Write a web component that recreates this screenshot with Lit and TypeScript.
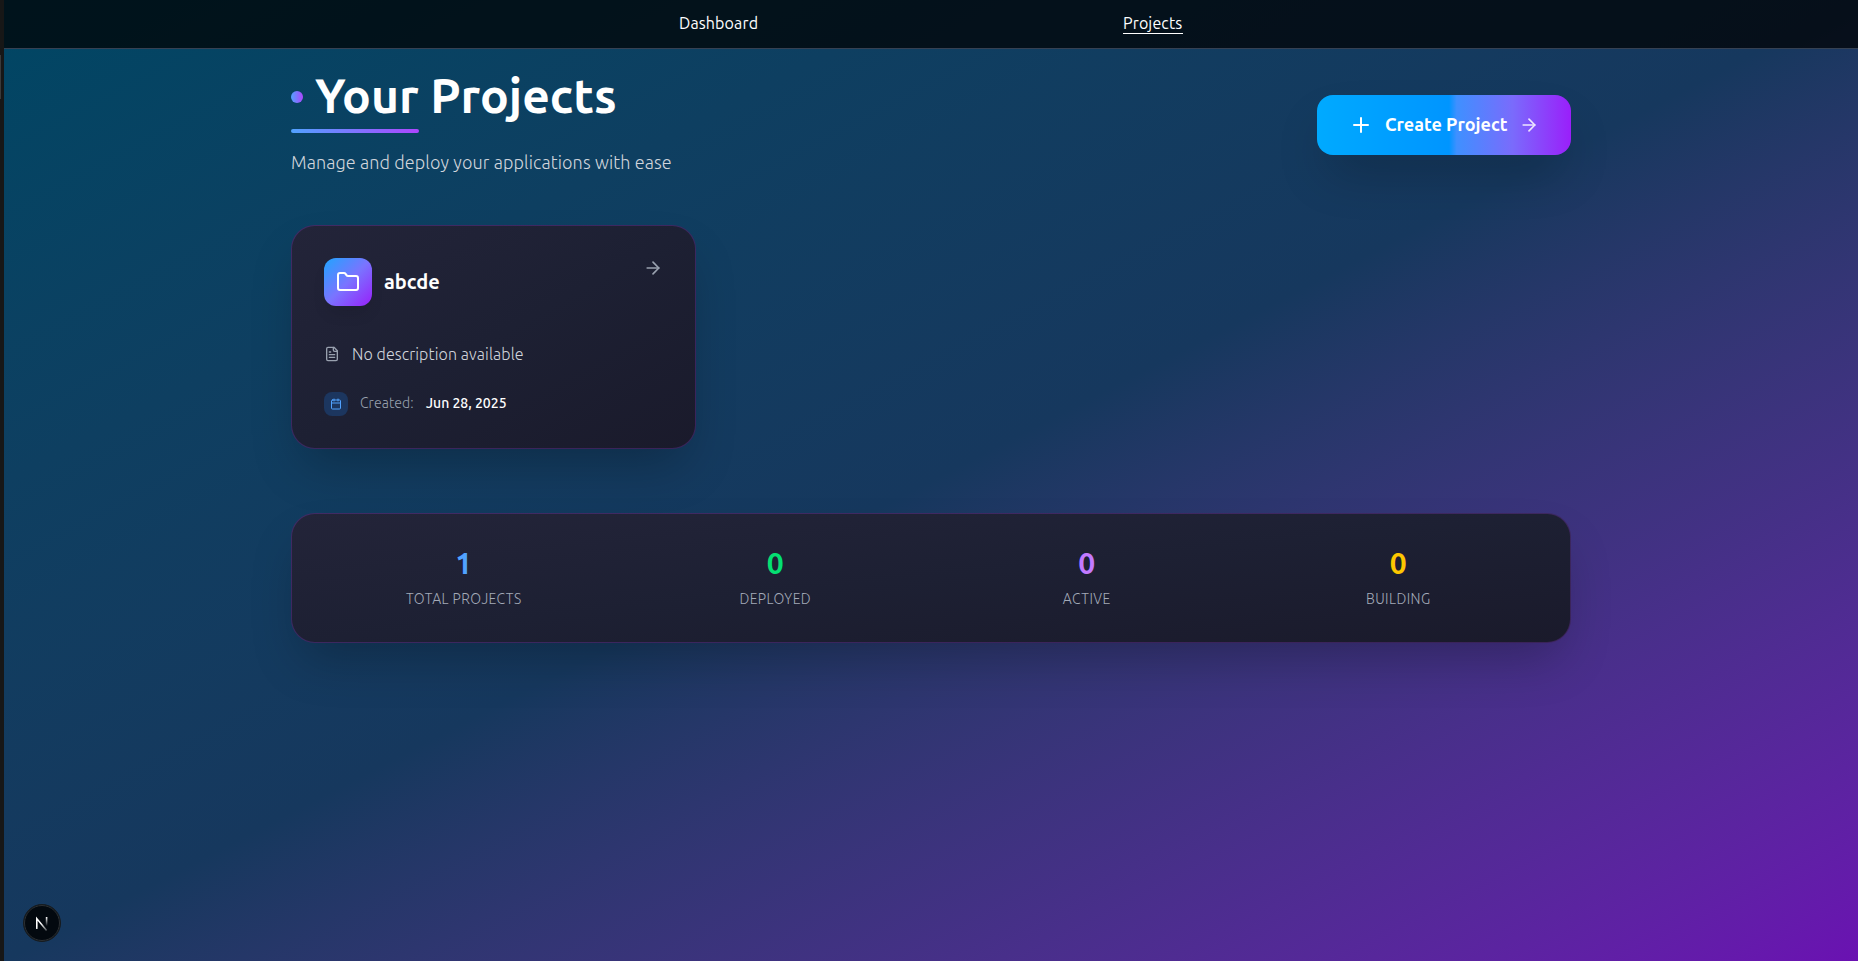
import { LitElement, html, css, svg } from "lit";
import { customElement } from "lit/decorators.js";

const stroke = (size: number, width: number, body: unknown) => html`<svg
  width=${size} height=${size} viewBox="0 0 24 24" fill="none" stroke="currentColor"
  stroke-width=${width} stroke-linecap="round" stroke-linejoin="round">${body}</svg>`;

const arrow = svg`<path d="M5 12h14"/><path d="m12 5 7 7-7 7"/>`;
const plus = svg`<path d="M5 12h14"/><path d="M12 5v14"/>`;
const folder = svg`<path d="M20 20a2 2 0 0 0 2-2V8a2 2 0 0 0-2-2h-7.9a2 2 0 0 1-1.69-.9L9.6 3.9A2 2 0 0 0 7.93 3H4a2 2 0 0 0-2 2v13a2 2 0 0 0 2 2Z"/>`;
const file = svg`<path d="M15 2H6a2 2 0 0 0-2 2v16a2 2 0 0 0 2 2h12a2 2 0 0 0 2-2V7Z"/><path d="M14 2v4a2 2 0 0 0 2 2h4"/><path d="M10 9H8"/><path d="M16 13H8"/><path d="M16 17H8"/>`;
const calendar = svg`<path d="M8 2v4"/><path d="M16 2v4"/><rect width="18" height="18" x="3" y="4" rx="2"/><path d="M3 10h18"/>`;

const stats = [
  { value: 1, label: "TOTAL PROJECTS", tone: "blue" },
  { value: 0, label: "DEPLOYED", tone: "green" },
  { value: 0, label: "ACTIVE", tone: "purple" },
  { value: 0, label: "BUILDING", tone: "yellow" },
];

@customElement("app-root")
export class AppRoot extends LitElement {
  static styles = css`
    :host {
      display: flex;
      height: 961px;
      overflow: hidden;
      position: relative;
      font-family: Ubuntu, "Noto Sans", sans-serif;
      font-size: 16px;
      line-height: 24px;
      color: #fff;
      background: #171717;
    }
    * { box-sizing: border-box; }
    svg { display: block; flex: none; }
    h1, h2, p { margin: 0; }
    .edge { width: 4px; flex: none; padding-top: 55px; }
    .thumb { width: 1px; height: 44px; background: #3a3a3a; }
    .page {
      flex: 1;
      background: linear-gradient(to bottom right in oklab, #004664, #16385e 50%, #6a11b2);
    }
    .nav {
      height: 49px;
      display: flex;
      justify-content: center;
      gap: 365px;
      padding-top: 11px;
      background: rgba(0, 0, 0, 0.72);
      border-bottom: 1px solid #364153;
      white-space: nowrap;
    }
    .nav span { height: 23px; letter-spacing: 0.13px; }
    .dash { width: 79px; }
    .proj { width: 60px; border-bottom: 1px solid #fff; }
    .content { width: 1280px; margin: 0 auto; padding-top: 18px; }
    .head { display: flex; justify-content: space-between; height: 158px; }
    .title { display: flex; align-items: center; gap: 12px; height: 60px; }
    .dot { width: 12px; height: 12px; border-radius: 50%; background: linear-gradient(90deg, #51a2ff, #ad46ff); }
    h1 { font-size: 48px; line-height: 60px; margin-top: -4px; font-weight: 700; white-space: nowrap; }
    .bar { width: 128px; height: 4px; border-radius: 2px; margin-top: 2px; background: linear-gradient(90deg, #51a2ff, #ad46ff); }
    .sub { margin-top: 15px; font-size: 18px; line-height: 28px; font-weight: 300; letter-spacing: 0.11px; color: #d1d5dc; white-space: nowrap; }
    .create {
      display: flex;
      align-items: center;
      gap: 12px;
      width: 254px;
      height: 60px;
      padding: 0 32px;
      margin-top: 28px;
      border-radius: 16px;
      font-size: 18px;
      font-weight: 600;
      white-space: nowrap;
      background: linear-gradient(90deg, #00aaff, #0095ff 52%, #3f90ff 55%, #7a6bfc 77%, #9a1ffa);
      box-shadow: 0 25px 50px -12px rgba(0, 0, 0, 0.25);
    }
    .create-label { width: 122px; margin-top: -2px; }
    .faded { opacity: 0.85; }
    .panel {
      border: 1px solid rgba(173, 70, 255, 0.22);
      border-radius: 24px;
      background: linear-gradient(to bottom right, #232439, #1d2033 50%, #1a1a2b) border-box;
      box-shadow: 0 25px 50px -12px rgba(0, 0, 0, 0.25);
    }
    .card { width: 405.33px; height: 224px; padding: 32px; }
    .row { display: flex; align-items: center; }
    .top { gap: 12px; height: 48px; }
    .tile {
      display: grid;
      place-items: center;
      width: 48px;
      height: 48px;
      border-radius: 12px;
      background: linear-gradient(135deg, #1fa5ff, #7a74ff 50%, #9820fa);
      box-shadow: 0 10px 15px -3px rgba(0, 0, 0, 0.1);
    }
    h2 { flex: 1; font-size: 20px; line-height: 28px; font-weight: 600; }
    .go { align-self: flex-start; color: #99a1af; }
    .desc { margin-top: 36px; gap: 12px; height: 24px; color: #d1d5dc; font-weight: 300; letter-spacing: 0.1px; white-space: nowrap; }
    .desc svg { color: #99a1af; }
    .date { margin-top: 26px; gap: 12px; height: 24px; font-size: 14px; line-height: 20px; white-space: nowrap; }
    .made, .when { margin-top: -2px; }
    .cal { display: grid; place-items: center; width: 24px; height: 24px; border-radius: 8px; background: #1c365f; color: #51a2ff; }
    .made { width: 54px; color: #99a1af; font-weight: 300; letter-spacing: 0.1px; }
    .when { font-weight: 500; }
    .stats {
      display: grid;
      grid-template-columns: repeat(4, 1fr);
      gap: 32px;
      margin-top: 64px;
      height: 130px;
      padding: 31px 32px;
      text-align: center;
    }
    .value { font-size: 30px; line-height: 36px; font-weight: 600; }
    .label { margin-top: 8px; font-size: 14px; line-height: 20px; font-weight: 300; letter-spacing: 0.44px; color: #a3aab8; }
    .blue { color: #51a2ff; }
    .green { color: #05df72; }
    .purple { color: #c27aff; }
    .yellow { color: #fdc700; }
    .badge { position: absolute; left: 23px; top: 904px; }
  `;

  render() {
    return html`
      <div class="edge"><div class="thumb"></div></div>
      <div class="page">
        <nav class="nav"><span class="dash">Dashboard</span><span class="proj">Projects</span></nav>
        <main class="content">
          <header class="head">
            <div>
              <div class="title"><i class="dot"></i><h1>Your Projects</h1></div>
              <div class="bar"></div>
              <p class="sub">Manage and deploy your applications with ease</p>
            </div>
            <div class="create">
              ${stroke(24, 2, plus)}
              <span class="create-label">Create Project</span>
              <span class="faded">${stroke(20, 2, arrow)}</span>
            </div>
          </header>
          <section class="panel card">
            <div class="row top">
              <div class="tile">${stroke(24, 2, folder)}</div>
              <h2>abcde</h2>
              <span class="go">${stroke(20, 2, arrow)}</span>
            </div>
            <div class="row desc">${stroke(16, 2, file)}<span>No description available</span></div>
            <div class="row date">
              <span class="cal">${stroke(12, 2, calendar)}</span>
              <span class="made">Created:</span><span class="when">Jun 28, 2025</span>
            </div>
          </section>
          <section class="panel stats">
            ${stats.map((s) => html`<div><div class="value ${s.tone}">${s.value}</div><div class="label">${s.label}</div></div>`)}
          </section>
        </main>
      </div>
      <svg class="badge" width="38" height="38" viewBox="0 0 38 38" fill="none">
        <defs>
          <linearGradient id="tail" x1="19" y1="19" x2="24" y2="26" gradientUnits="userSpaceOnUse">
            <stop offset="0" stop-color="#fff"/><stop offset="1" stop-color="#fff" stop-opacity="0.3"/>
          </linearGradient>
          <linearGradient id="stem" x1="0" y1="13" x2="0" y2="22" gradientUnits="userSpaceOnUse">
            <stop offset="0" stop-color="#fff"/><stop offset="1" stop-color="#fff" stop-opacity="0"/>
          </linearGradient>
        </defs>
        <circle cx="19" cy="19" r="18.5" fill="#03090f" stroke="#171c20"/>
        <circle cx="19" cy="19" r="17.5" stroke="#2c3033"/>
        <path d="M13.8 25V14.6L23.6 26.4" stroke="url(#tail)" stroke-width="1.6"/>
        <rect x="22.8" y="13" width="1.6" height="9" fill="url(#stem)"/>
      </svg>
    `;
  }
}
